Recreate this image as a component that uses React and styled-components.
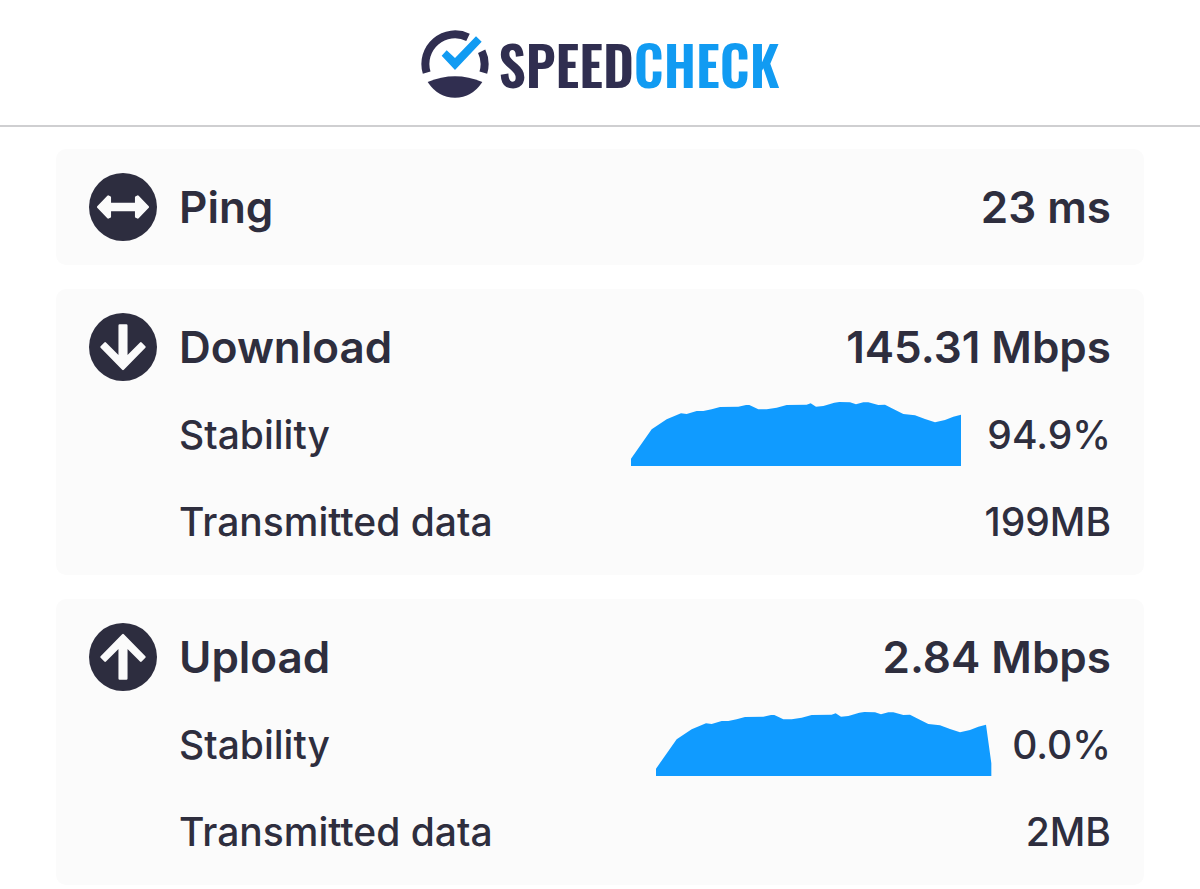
import React from "react";
import styled, { createGlobalStyle } from "styled-components";

const GlobalStyle = createGlobalStyle`
  * { box-sizing: border-box; }
  body {
    margin: 0;
    background: #fff;
    color: #2e2e3e;
    font-family: Inter, "Liberation Sans", sans-serif;
  }
`;

const Header = styled.header`
  display: flex;
  align-items: center;
  justify-content: center;
  gap: 10px;
  height: 127px;
  padding-top: 3px;
  border-bottom: 2px solid #cfcfd1;
`;

const LogoMark = styled.svg`
  width: 68px;
  height: 68px;
  flex: none;
`;

const Wordmark = styled.h1`
  margin: 0;
  color: #302e50;
  font-family: Oswald, "Roboto Condensed", "Liberation Sans Narrow", sans-serif;
  font-size: 54px;
  font-weight: 600;
  line-height: 68px;
`;

const Accent = styled.span`
  color: #119bf2;
`;

const Results = styled.main`
  display: flex;
  flex-direction: column;
  gap: 24px;
  padding: 22px 56px 4px;
`;

const Card = styled.section`
  padding: 24px 33px;
  border-radius: 10px;
  background: #fbfbfb;
`;

const CardHead = styled.div`
  display: flex;
  align-items: center;
  min-height: 68px;
  font-size: 44px;
  font-weight: 600;
`;

const Badge = styled.svg`
  width: 68px;
  height: 68px;
  flex: none;
  margin-right: 22px;
`;

const Title = styled.h2`
  margin: 0;
  font-size: inherit;
  font-weight: inherit;
`;

const HeadValue = styled.span`
  margin-left: auto;
`;

const Details = styled.dl`
  display: grid;
  gap: 23px;
  margin: 21px 0 -2px 90px;
`;

const Detail = styled.div`
  display: flex;
  align-items: center;
  justify-content: space-between;
  height: 64px;
  font-size: 39px;
  font-weight: 500;
`;

const Value = styled.dd`
  display: flex;
  align-items: center;
  gap: ${(p) => (p.$tight ? 20 : 26)}px;
  margin: 0;
`;

const Chart = styled.svg`
  width: ${(p) => p.$width}px;
  height: 64px;
`;

const profile =
  "0,170 62,82 107,52 150,34 167,36 197,27 217,27 242,22 267,15 322,14 345,9 355,9 382,22 407,22 437,17 467,9 527,8 539,4 555,14 577,12 610,2 625,0 657,1 675,7 697,1 712,1 742,9 762,8 787,21 817,36 852,40 882,51 912,61 942,54 967,44 990,38";

function Sparkline({ tail }) {
  const w = tail ? 1008 : 990;
  const end = tail ? "1006,154 1006,192" : "990,192";
  return (
    <Chart $width={w / 3} viewBox={`0 0 ${w} 192`} aria-hidden="true">
      <polygon fill="#109bff" points={`${profile} ${end} 0,192`} />
    </Chart>
  );
}

const shapes = {
  ping: "M27 101 L57 70 L62 72 L62 92 L140 92 L140 72 L145 70 L175 101 L145 132 L140 130 L140 110 L62 110 L62 130 L57 132 Z",
  down: "M91 37 H111 V133 L154 90 L165 101 L101 166 L37 101 L48 90 L91 133 Z",
  up: "M91 165 H111 V69 L154 112 L165 101 L101 36 L37 101 L48 112 L91 69 Z",
};

function StatIcon({ kind }) {
  return (
    <Badge viewBox="0 0 202 202" aria-hidden="true">
      <circle cx="101" cy="101" r="101" fill="#2d2d3f" />
      <path d={shapes[kind]} fill="#fbfbfb" stroke="#fbfbfb" strokeWidth="7" strokeLinejoin="round" />
    </Badge>
  );
}

function Stat({ kind, title, value, stability, data, tail }) {
  return (
    <Card>
      <CardHead>
        <StatIcon kind={kind} />
        <Title>{title}</Title>
        <HeadValue>{value}</HeadValue>
      </CardHead>
      {stability && (
        <Details>
          <Detail>
            <dt>Stability</dt>
            <Value $tight={tail}>
              <Sparkline tail={tail} />
              {stability}
            </Value>
          </Detail>
          <Detail>
            <dt>Transmitted data</dt>
            <Value>{data}</Value>
          </Detail>
        </Details>
      )}
    </Card>
  );
}

export default function App() {
  return (
    <>
      <GlobalStyle />
      <Header>
        <LogoMark viewBox="35 31 204 204" aria-hidden="true">
          <g fill="none" stroke="#302e50" strokeWidth="24">
            <path d="M52 159 A89 89 0 0 1 176 53" />
            <path d="M217 95 A89 89 0 0 1 222 159" />
          </g>
          <path fill="#302e50" d="M55 187 Q137 153 219 187 Q188 234 137 234 Q86 234 55 187 Z" />
          <path fill="#119bf2" d="M97 108 L112 92 L137 115 L200 50 L217 66 L137 151 Z" />
        </LogoMark>
        <Wordmark>
          SPEED<Accent>CHECK</Accent>
        </Wordmark>
      </Header>
      <Results>
        <Stat kind="ping" title="Ping" value="23 ms" />
        <Stat kind="down" title="Download" value="145.31 Mbps" stability="94.9%" data="199MB" />
        <Stat kind="up" title="Upload" value="2.84 Mbps" stability="0.0%" data="2MB" tail />
      </Results>
    </>
  );
}
